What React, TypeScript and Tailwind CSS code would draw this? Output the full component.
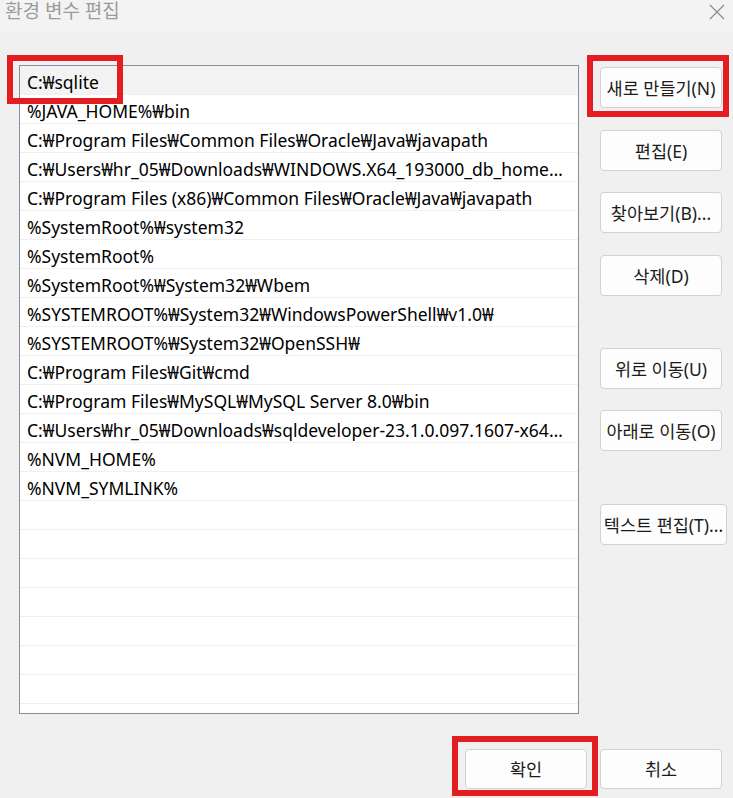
import React from 'react';

const paths: string[] = [
  'C:₩sqlite',
  '%JAVA_HOME%₩bin',
  'C:₩Program Files₩Common Files₩Oracle₩Java₩javapath',
  'C:₩Users₩hr_05₩Downloads₩WINDOWS.X64_193000_db_home₩bin',
  'C:₩Program Files (x86)₩Common Files₩Oracle₩Java₩javapath',
  '%SystemRoot%₩system32',
  '%SystemRoot%',
  '%SystemRoot%₩System32₩Wbem',
  '%SYSTEMROOT%₩System32₩WindowsPowerShell₩v1.0₩',
  '%SYSTEMROOT%₩System32₩OpenSSH₩',
  'C:₩Program Files₩Git₩cmd',
  'C:₩Program Files₩MySQL₩MySQL Server 8.0₩bin',
  'C:₩Users₩hr_05₩Downloads₩sqldeveloper-23.1.0.097.1607-x64₩sqldeveloper₩jdk₩jre₩bin',
  '%NVM_HOME%',
  '%NVM_SYMLINK%',
];

const TOTAL_ROWS = 22;

const WinButton: React.FC<{ label: string; className?: string }> = ({ label, className = '' }) => (
  <button
    className={`h-[41px] w-[122px] overflow-hidden whitespace-nowrap rounded-[4px] border border-[#d1d1d1] bg-[#fdfdfd] px-0 text-[17.5px] leading-[22px] text-[#1b1b1b] ${className}`}
  >
    {label}
  </button>
);

const App: React.FC = () => {
  const rows = Array.from({ length: TOTAL_ROWS }, (_, i) => paths[i] ?? '');

  return (
    <div
      className="relative h-[798px] w-[733px] overflow-hidden bg-[#f0f0f0]"
      style={{ fontFamily: '"Noto Sans", "Noto Sans CJK KR", sans-serif' }}
    >
      {/* title bar */}
      <div className="flex h-[33px] items-start justify-between bg-[#f3f3f3] pl-[5px] pr-[7px]">
        <span className="mt-[1px] text-[19px] leading-[20px] text-[#9b9b9b]">환경 변수 편집</span>
        <svg width="18" height="18" viewBox="0 0 18 18" className="mt-[3px]">
          <path d="M2 2 L16 16 M16 2 L2 16" stroke="#8c8c8c" strokeWidth="1.2" />
        </svg>
      </div>

      <div className="mt-[32px] flex">
        {/* path list */}
        <div className="ml-[19px] h-[649px] w-[560px] border border-[#898d99] bg-white">
          {rows.map((p, i) => (
            <div
              key={i}
              className={`h-[29px] truncate border-b border-[#f0f0f0] pl-[7px] pr-[10px] pt-[4px] text-[17.5px] leading-[25px] text-black ${
                i === 0 ? 'bg-[#f3f3f3]' : ''
              }`}
            >
              {p}
            </div>
          ))}
        </div>

        {/* side buttons */}
        <div className="ml-[21px] mt-[2px] flex flex-col">
          <WinButton label="새로 만들기(N)" />
          <WinButton label="편집(E)" className="mt-[22px]" />
          <WinButton label="찾아보기(B)..." className="mt-[21px]" />
          <WinButton label="삭제(D)" className="mt-[22px]" />
          <WinButton label="위로 이동(U)" className="mt-[52px]" />
          <WinButton label="아래로 이동(O)" className="mt-[21px]" />
          <WinButton label="텍스트 편집(T)..." className="mt-[53px] !w-[127px]" />
        </div>
      </div>

      <div className="mt-[35px] flex justify-end gap-[13px] pr-[11px]">
        <WinButton label="확인" className="!h-[40px]" />
        <WinButton label="취소" className="!h-[40px]" />
      </div>

      {/* red annotation boxes */}
      <div className="pointer-events-none absolute left-[7px] top-[55px] h-[49px] w-[116px] border-[6px] border-[#e41e20]" />
      <div className="pointer-events-none absolute left-[587px] top-[55px] h-[62px] w-[142px] border-[6px] border-[#e41e20]" />
      <div className="pointer-events-none absolute left-[452px] top-[736px] h-[60px] w-[146px] border-[6px] border-[#e41e20]" />
    </div>
  );
};

export default App;
